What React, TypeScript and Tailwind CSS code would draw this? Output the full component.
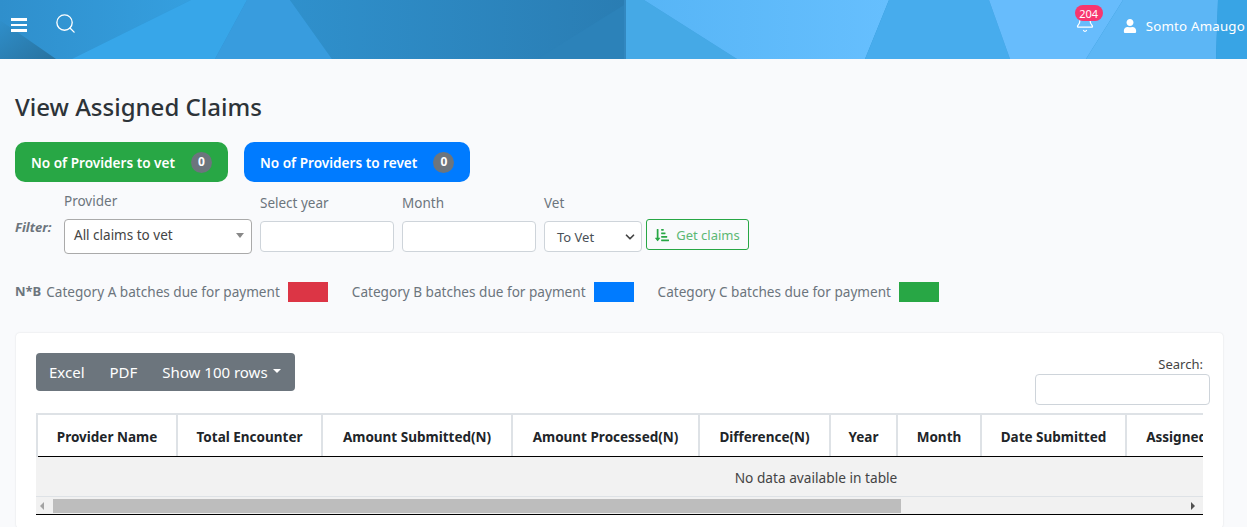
import React from 'react';
import { Bell, ChevronDown, Search } from 'lucide-react';
import { FaSortAmountDownAlt, FaUser } from 'react-icons/fa';

const columns = [
  { label: 'Provider Name', width: 'w-[140px]' },
  { label: 'Total Encounter', width: 'w-[145px]' },
  { label: 'Amount Submitted(N)', width: 'w-[190px]' },
  { label: 'Amount Processed(N)', width: 'w-[187px]' },
  { label: 'Difference(N)', width: 'w-[131px]' },
  { label: 'Year', width: 'w-[67px]' },
  { label: 'Month', width: 'w-[84px]' },
  { label: 'Date Submitted', width: 'w-[145px]' },
  { label: 'Assigned To', width: 'w-[120px]' },
];

const HeaderBackground = () => (
  <svg className="absolute inset-0 h-full w-full" viewBox="0 0 1247 59" preserveAspectRatio="none">
    <defs>
      <linearGradient id="leftBlue" x1="0" y1="0" x2="1" y2="0">
        <stop offset="0" stopColor="#2f8fcc" />
        <stop offset="1" stopColor="#359fdf" />
      </linearGradient>
      <linearGradient id="darkBlue" x1="0" y1="0" x2="1" y2="0">
        <stop offset="0" stopColor="#2f90cc" />
        <stop offset="1" stopColor="#2a7db3" />
      </linearGradient>
      <linearGradient id="lightBlue" x1="0" y1="0" x2="1" y2="0">
        <stop offset="0" stopColor="#57b5f6" />
        <stop offset="1" stopColor="#66bffe" />
      </linearGradient>
      <linearGradient id="cornerBlue" x1="0" y1="0" x2="1" y2="1">
        <stop offset="0" stopColor="#2f8fcb" />
        <stop offset="1" stopColor="#28729f" />
      </linearGradient>
    </defs>
    <rect x="0" y="0" width="1247" height="59" fill="#2f94d2" />
    <polygon points="0,0 191,0 72,59 56,59 0,20" fill="url(#leftBlue)" />
    <polygon points="0,20 56,59 0,59" fill="url(#cornerBlue)" />
    <polygon points="72,59 191,0 247,0 215,59" fill="#37a6e9" />
    <polygon points="247,0 290,0 332,59 215,59" fill="#389cde" />
    <polygon points="290,0 624,0 624,59 332,59" fill="url(#darkBlue)" />
    <polygon points="537,59 624,5 624,59" fill="#2c82b9" />
    <polygon points="624,0 644,0 737,59 624,59" fill="#45a9e6" />
    <polygon points="624,0 626,0 626,59 624,59" fill="#3288c0" />
    <polygon points="644,0 889,0 865,59 737,59" fill="url(#lightBlue)" />
    <polygon points="889,0 989,0 1010,59 865,59" fill="#47aced" />
    <polygon points="989,0 1123,0 1086,59 1010,59" fill="#67bcfc" />
    <polygon points="1123,0 1218,0 1216,59 1086,59" fill="#5cb6f5" />
    <polygon points="1218,0 1247,0 1247,59 1216,59" fill="#38a4e5" />
  </svg>
);

const TopBar = () => (
  <header className="relative h-[59px] overflow-hidden text-white">
    <HeaderBackground />
    <div className="relative flex h-full items-start justify-between pl-[11px] pr-[2px]">
      <div className="flex items-start gap-[27px]">
        <div className="mt-[18px] flex w-[16px] flex-col gap-[3px]">
          <span className="h-[2.5px] bg-white" />
          <span className="h-[2.5px] bg-white" />
          <span className="h-[2.5px] bg-white" />
        </div>
        <Search size={23} strokeWidth={1.4} className="mt-[12px]" />
      </div>
      <div className="flex items-start pt-[5px]">
        <div className="relative mr-[20px] h-[28px] w-[28px]">
          <Bell size={20} strokeWidth={1.5} className="absolute left-0 top-[8px]" />
          <span className="absolute left-0 top-0 flex h-[16px] w-[28px] items-center justify-center rounded-full bg-[#f8366f] text-[11px] leading-none">
            204
          </span>
        </div>
        <FaUser size={14} className="mt-[14px] mr-[9px]" />
        <span className="mt-[11px] text-[13.3px] leading-[20px] tracking-[0.2px]">Somto Amaugo</span>
      </div>
    </div>
  </header>
);

const CountButton = ({ label, color }: { label: string; color: string }) => (
  <div className={`flex h-[40px] items-center gap-[16px] rounded-[10px] px-[16px] text-[13.6px] font-semibold text-white ${color}`}>
    <span className="translate-y-[1px]">{label}</span>
    <span className="flex h-[21px] w-[21px] items-center justify-center rounded-full bg-[#6c757d] text-[12px] font-bold">0</span>
  </div>
);

const Filters = () => (
  <div className="mt-[9px] flex items-start text-[13.5px] text-[#6c757d]">
    <div className="mt-[26px] w-[49px] text-[13px] font-bold italic leading-[20px]">Filter:</div>
    <div className="w-[188px]">
      <div className="h-[28px] leading-[20px]">Provider</div>
      <div className="flex h-[35px] items-center justify-between rounded-[4px] border border-[#aaaaaa] bg-white pl-[9px] pr-[7px] pb-[3px] text-[#444444]">
        <span>All claims to vet</span>
        <span className="h-0 w-0 border-x-[4px] border-t-[5px] border-x-transparent border-t-[#888888]" />
      </div>
    </div>
    <div className="ml-[8px] mt-[2px] w-[134px]">
      <div className="h-[28px] leading-[20px]">Select year</div>
      <div className="h-[31px] rounded-[4px] border border-[#ced4da] bg-white" />
    </div>
    <div className="ml-[8px] mt-[2px] w-[134px]">
      <div className="h-[28px] leading-[20px]">Month</div>
      <div className="h-[31px] rounded-[4px] border border-[#ced4da] bg-white" />
    </div>
    <div className="ml-[8px] mt-[2px] w-[98px]">
      <div className="h-[28px] leading-[20px]">Vet</div>
      <div className="flex h-[31px] items-center justify-between rounded-[4px] border border-[#ced4da] bg-white pl-[12px] pr-[4px] text-[13px] text-[#495057]">
        <span className="translate-y-[1px]">To Vet</span>
        <ChevronDown size={14} strokeWidth={3} className="text-[#444444]" />
      </div>
    </div>
    <div className="ml-[4px] mt-[28px] flex h-[31px] w-[103px] items-center justify-center gap-[7px] rounded-[3px] border border-[#28a745] text-[13px] text-[#5cb874]">
      <FaSortAmountDownAlt size={14} className="text-[#28a745]" />
      <span className="translate-y-[1px]">Get claims</span>
    </div>
  </div>
);

const Legend = () => (
  <div className="mt-[28px] flex items-center text-[13.58px] text-[#6c757d]">
    <span className="mr-[5px] text-[13px] font-bold">N*B</span>
    <span>Category A batches due for payment</span>
    <span className="ml-[8px] h-[20px] w-[40px] bg-[#dc3545]" />
    <span className="ml-[24px]">Category B batches due for payment</span>
    <span className="ml-[8px] h-[20px] w-[40px] bg-[#007bff]" />
    <span className="ml-[24px]">Category C batches due for payment</span>
    <span className="ml-[8px] h-[20px] w-[40px] bg-[#28a745]" />
  </div>
);

const ClaimsTable = () => (
  <div className="relative rounded-[4px] bg-white px-[20px] pt-[20px] pb-[13px] shadow-[0_0_2px_rgba(0,0,0,0.12)]">
    <div className="flex items-start justify-between">
      <div className="flex h-[38px] items-center rounded-[4px] bg-[#6c757d] pl-[13px] pr-[14px] text-[15px] text-white">
        <span>Excel</span>
        <span className="ml-[25px]">PDF</span>
        <span className="ml-[25px]">Show 100 rows</span>
        <span className="ml-[5px] mb-[2px] h-0 w-0 border-x-[4.5px] border-t-[4.5px] border-x-transparent border-t-white" />
      </div>
      <div className="mr-[-7px] flex flex-col items-end">
        <div className="mr-[7px] mt-[2px] h-[19px] text-[13px] leading-[19px] text-[#444444]">Search:</div>
        <div className="h-[31px] w-[175px] rounded-[4px] border border-[#ced4da] bg-white" />
      </div>
    </div>
    <div className="mt-[8px] overflow-hidden">
      <div className="w-[1300px] border-l-2 border-t-2 border-[#dee2e6]">
        <div className="flex h-[42px] border-b border-black">
          {columns.map((c) => (
            <div
              key={c.label}
              className={`flex shrink-0 items-center justify-center whitespace-nowrap border-r-2 border-[#dee2e6] pt-[2px] text-[13.5px] font-bold text-[#212529] ${c.width}`}
            >
              {c.label}
            </div>
          ))}
        </div>
      </div>
      <div className="flex h-[40px] w-[1560px] items-center justify-center border-b border-[#dee2e6] bg-[#f2f2f2] pt-[3px] text-[13.7px] text-[#444444]">
        No data available in table
      </div>
      <div className="flex h-[17px] items-center bg-[#f1f1f1]">
        <span className="ml-[4px] h-0 w-0 border-y-[4px] border-r-[4px] border-y-transparent border-r-[#a3a3a3]" />
        <div className="ml-[9px] h-[14px] w-[848px] bg-[#bdbdbd]" />
        <span className="ml-auto mr-[8px] h-0 w-0 border-y-[4px] border-l-[4px] border-y-transparent border-l-[#505050]" />
      </div>
      <div className="h-px bg-black" />
    </div>
  </div>
);

export default function App() {
  return (
    <div className="h-[527px] w-[1247px] overflow-hidden bg-[#f9fafc] font-['Noto_Sans','Open_Sans',sans-serif]">
      <TopBar />
      <main className="pl-[15px] pr-[24px]">
        <h1 className="mt-[32px] text-[24px] font-medium leading-[32px] text-[#2d3338]">View Assigned Claims</h1>
        <div className="mt-[19px] flex gap-[16px]">
          <CountButton label="No of Providers to vet" color="bg-[#28a745]" />
          <CountButton label="No of Providers to revet" color="bg-[#007bff]" />
        </div>
        <Filters />
        <Legend />
        <div className="ml-[1px] mt-[31px]">
          <ClaimsTable />
        </div>
      </main>
    </div>
  );
}
